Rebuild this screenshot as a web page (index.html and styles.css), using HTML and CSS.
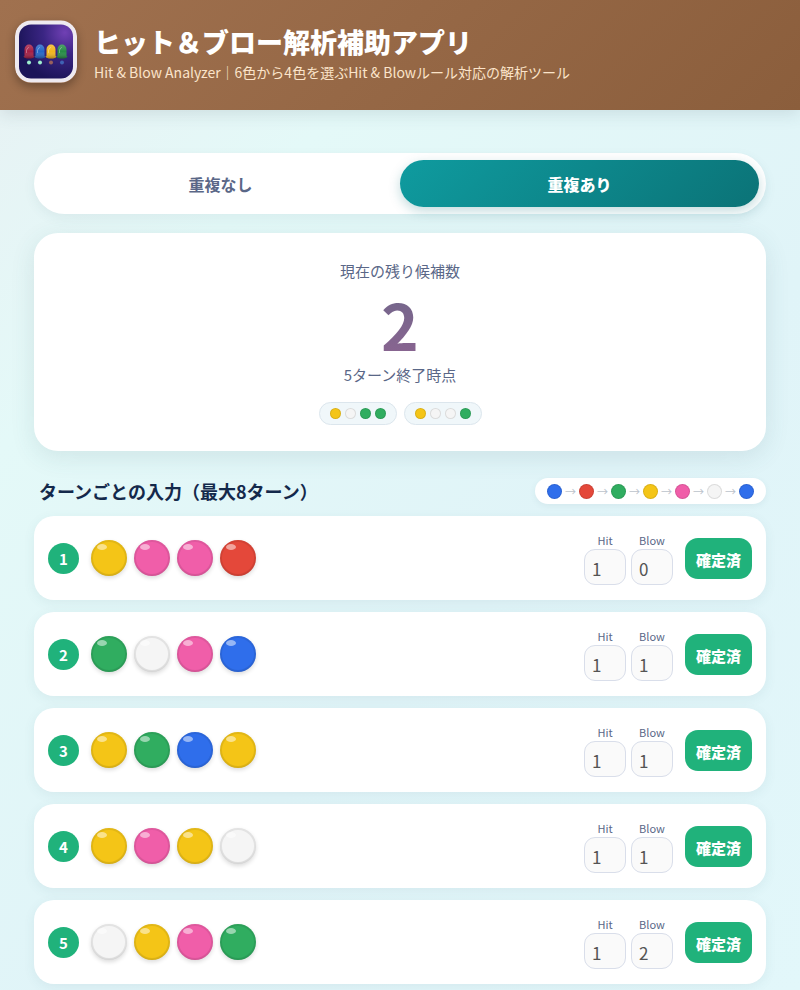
FILE: index.html
```html
<!DOCTYPE html>
<html lang="ja">
<head>
    <meta charset="UTF-8">
    <meta name="viewport" content="width=device-width, initial-scale=1.0">
    <title>ヒット&amp;ブロー解析補助アプリ</title>
    <link rel="stylesheet" href="styles.css">
</head>
<body>
    <header class="app-header">
        <svg class="app-icon" viewBox="0 0 62 62" aria-hidden="true">
            <defs>
                <radialGradient id="icon-bg" cx="0.85" cy="0.15" r="0.9">
                    <stop offset="0" stop-color="#7040b4"/>
                    <stop offset="0.45" stop-color="#3a2583"/>
                    <stop offset="1" stop-color="#1b1458"/>
                </radialGradient>
                <linearGradient id="peg-shade" x1="0" y1="0" x2="0" y2="1">
                    <stop offset="0" stop-color="#fff" stop-opacity="0.2"/>
                    <stop offset="0.5" stop-color="#fff" stop-opacity="0"/>
                    <stop offset="1" stop-color="#000" stop-opacity="0.3"/>
                </linearGradient>
                <path id="peg" d="M1.5 12.500V6a4.500 5 0 0 1 9 0v6.500l1 .5q-1 2-5.500 2t-5.500-2z"/>
            </defs>
            <rect width="62" height="62" rx="16" fill="#eeeaf0"/>
            <rect x="4" y="4" width="54" height="54" rx="12" fill="url(#icon-bg)"/>
            <use href="#peg" x="8" y="23" fill="#a51f45"/>
            <use href="#peg" x="19" y="23" fill="#2466c7"/>
            <use href="#peg" x="30" y="23" fill="#f2b51d"/>
            <use href="#peg" x="41" y="23" fill="#268c46"/>
            <use href="#peg" x="8" y="23" fill="url(#peg-shade)"/>
            <use href="#peg" x="19" y="23" fill="url(#peg-shade)"/>
            <use href="#peg" x="30" y="23" fill="url(#peg-shade)"/>
            <use href="#peg" x="41" y="23" fill="url(#peg-shade)"/>
            <path d="M11.500 32v-2q0-2 2-3M22.500 32v-2q0-2 2-3M33.500 32v-2q0-2 2-3M44.500 32v-2q0-2 2-3" fill="none" stroke="#fff" stroke-opacity="0.35" stroke-linecap="round"/>
            <circle cx="14" cy="42" r="2" fill="#9ff0cf"/>
            <circle cx="25" cy="42" r="2" fill="#9ff0cf"/>
            <circle cx="36" cy="42" r="2" fill="#99605c"/>
            <circle cx="47" cy="42" r="2" fill="#3f62b4"/>
        </svg>
        <div>
            <h1>ヒット＆ブロー解析補助アプリ</h1>
            <p class="subtitle">Hit &amp; Blow Analyzer｜6色から4色を選ぶHit &amp; Blowルール対応の解析ツール</p>
        </div>
    </header>

    <main>
        <div class="mode-switch">
            <button class="mode-btn" type="button">重複なし</button>
            <button class="mode-btn active" type="button">重複あり</button>
        </div>

        <section class="summary">
            <p class="summary-label">現在の残り候補数</p>
            <p class="summary-count">2</p>
            <p class="summary-label">5ターン終了時点</p>
            <div class="candidates">
                <div class="candidate"><i class="dot yellow"></i><i class="dot white"></i><i class="dot green"></i><i class="dot green"></i></div>
                <div class="candidate"><i class="dot yellow"></i><i class="dot white"></i><i class="dot white"></i><i class="dot green"></i></div>
            </div>
        </section>

        <div class="section-head">
            <h2>ターンごとの入力（最大8ターン）</h2>
            <div class="color-order">
                <i class="dot blue"></i><span>→</span><i class="dot red"></i><span>→</span><i class="dot green"></i><span>→</span><i class="dot yellow"></i><span>→</span><i class="dot pink"></i><span>→</span><i class="dot white"></i><span>→</span><i class="dot blue"></i>
            </div>
        </div>

        <div class="turns" id="turns">
            <!-- Turn rows are added by script.js -->
        </div>
    </main>

    <script src="script.js"></script>
</body>
</html>
```

FILE: styles.css
```css
* {
    box-sizing: border-box;
}
body {
    margin: 0;
    min-height: 100vh;
    font-family: "Noto Sans CJK JP", sans-serif;
    color: #5a6787;
    background: linear-gradient(135deg, #e8f1f3 0%, #e4f9f8 25%, #e0f4f8 60%, #e2f7fa 100%);
}
h1, h2, p {
    margin: 0;
}
button, input {
    font-family: inherit;
}
.app-header {
    display: flex;
    align-items: center;
    gap: 17px;
    padding: 20px 15px 27px;
    color: #fff;
    background: linear-gradient(135deg, #a0714f 0%, #8b5e3c 100%);
    box-shadow: 0 4px 16px rgba(60, 80, 90, 0.14);
}
.app-icon {
    width: 62px;
    height: 63px;
    flex: none;
    border-radius: 16px;
    box-shadow: 0 4px 10px rgba(0, 0, 0, 0.3);
}
h1 {
    font-size: 27px;
    font-weight: 900;
    line-height: 40px;
}
.subtitle {
    font-size: 14px;
    line-height: 20px;
    color: #fbe4ca;
}
main {
    padding: 43px 34px 8px;
}
.mode-switch {
    display: flex;
    padding: 7px;
    border-radius: 31px;
    background: #fff;
    box-shadow: 0 4px 12px rgba(60, 100, 110, 0.08);
}
.mode-btn {
    flex: 1;
    height: 47px;
    border: none;
    border-radius: 24px;
    background: transparent;
    color: #5a6787;
    font-size: 16px;
    font-weight: 700;
    cursor: pointer;
}
.mode-btn.active {
    color: #fff;
    font-weight: 900;
    background: linear-gradient(135deg, #0f9b9f 0%, #0b7377 100%);
    box-shadow: 0 4px 12px rgba(13, 110, 120, 0.25);
}
.summary {
    margin-top: 19px;
    padding: 26px 20px;
    border-radius: 24px;
    background: #fff;
    text-align: center;
    box-shadow: 0 6px 24px rgba(60, 100, 110, 0.12);
}
.summary-label {
    font-size: 15px;
    line-height: 24px;
}
.summary-count {
    font-size: 64px;
    font-weight: 700;
    line-height: 80px;
    background: linear-gradient(#70678a, #8b6491);
    background-clip: text;
    -webkit-background-clip: text;
    color: transparent;
}
.candidates {
    display: flex;
    justify-content: center;
    gap: 7px;
    margin-top: 15px;
}
.candidate {
    display: flex;
    gap: 4px;
    padding: 5px 10px;
    border: 1px solid #dce6ed;
    border-radius: 12px;
    background: #f0f7fa;
}
.dot {
    width: 11px;
    height: 11px;
    border-radius: 50%;
    border: 1px solid rgba(0, 0, 0, 0.1);
}
.section-head {
    display: flex;
    align-items: center;
    justify-content: space-between;
    margin: 27px 0 12px;
}
h2 {
    padding-left: 5px;
    color: #14294b;
    font-size: 18px;
    line-height: 26px;
    font-weight: 700;
}
.color-order {
    display: flex;
    align-items: center;
    gap: 3px;
    height: 26px;
    padding: 0 12px;
    border-radius: 13px;
    background: #fff;
    box-shadow: 0 2px 6px rgba(60, 100, 110, 0.08);
}
.color-order .dot {
    width: 15px;
    height: 15px;
}
.color-order span {
    color: #bcc3cc;
    font-size: 11px;
    line-height: 15px;
}
.turns {
    display: flex;
    flex-direction: column;
    gap: 12px;
}
.turn {
    display: flex;
    align-items: center;
    gap: 12px;
    height: 84px;
    padding: 0 14px;
    border-radius: 20px;
    background: #fff;
    box-shadow: 0 3px 12px rgba(60, 100, 110, 0.08);
}
.turn-number {
    width: 31px;
    border-radius: 50%;
    background: #20b27b;
    color: #fff;
    font-size: 15px;
    font-weight: 700;
    line-height: 31px;
    text-align: center;
}
.pegs {
    display: flex;
    gap: 7px;
    flex: 1;
}
.peg {
    width: 36px;
    height: 36px;
    border-radius: 50%;
    box-shadow: 0 2px 4px rgba(0, 0, 0, 0.14), inset 0 -1px 2px rgba(0, 0, 0, 0.08), inset 0 0 0 2px rgba(0, 0, 0, 0.07);
}
/* glossy highlight */
.peg::before {
    content: "";
    display: block;
    width: 10px;
    height: 6px;
    margin: 4px 0 0 6px;
    border-radius: 50%;
    background: rgba(255, 255, 255, 0.5);
}
.blue { background: #2f6eeb; }
.red { background: #e4483a; }
.green { background: #30ad60; }
.yellow { background: #f4c517; }
.pink { background: #f05ea9; }
.white { background: #f5f5f5; }
.results {
    display: flex;
    gap: 5px;
}
.results label {
    display: flex;
    flex-direction: column;
    align-items: center;
    font-size: 11px;
    line-height: 18px;
}
.results input {
    width: 42px;
    height: 36px;
    padding: 2px 7px 0;
    border: 1px solid #d9deea;
    border-radius: 11px;
    background: #fafafa;
    color: #545454;
    font-size: 17px;
}
.confirm-btn {
    width: 67px;
    height: 41px;
    padding: 2px 0 0;
    border: none;
    border-radius: 13px;
    background: #20b27b;
    color: #fff;
    font-size: 15px;
    font-weight: 900;
}
@media (max-width: 600px) {
    main {
        padding: 24px 12px;
    }
    .section-head, .turn {
        flex-wrap: wrap;
        height: auto;
    }
    .turn {
        padding: 12px;
    }
}
```

FILE: script.js
```js
const turns = [
    { pegs: ['yellow', 'pink', 'pink', 'red'], hit: 1, blow: 0 },
    { pegs: ['green', 'white', 'pink', 'blue'], hit: 1, blow: 1 },
    { pegs: ['yellow', 'green', 'blue', 'yellow'], hit: 1, blow: 1 },
    { pegs: ['yellow', 'pink', 'yellow', 'white'], hit: 1, blow: 1 },
    { pegs: ['white', 'yellow', 'pink', 'green'], hit: 1, blow: 2 }
];

// Build one row per confirmed turn
document.getElementById('turns').innerHTML = turns.map((turn, index) => `
    <div class="turn">
        <div class="turn-number">${index + 1}</div>
        <div class="pegs">${turn.pegs.map(color => `<div class="peg ${color}"></div>`).join('')}</div>
        <div class="results">
            <label>Hit<input type="text" inputmode="numeric" value="${turn.hit}" readonly></label>
            <label>Blow<input type="text" inputmode="numeric" value="${turn.blow}" readonly></label>
        </div>
        <button class="confirm-btn" type="button">確定済</button>
    </div>
`).join('');

// Switch between the two rule modes
const modeButtons = document.querySelectorAll('.mode-btn');
modeButtons.forEach(button => {
    button.addEventListener('click', () => {
        modeButtons.forEach(other => other.classList.remove('active'));
        button.classList.add('active');
    });
});
```
